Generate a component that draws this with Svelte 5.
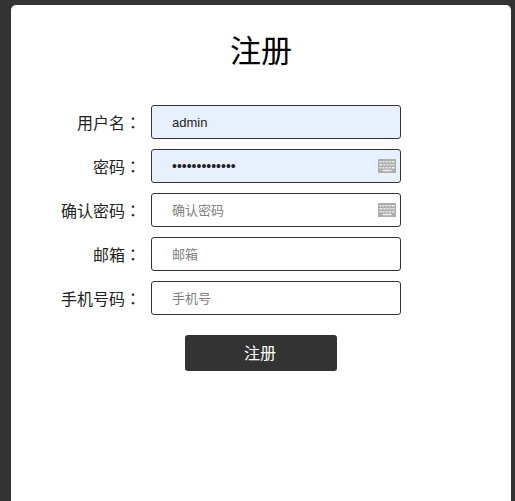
<script>
  const fields = [
    { label: '用户名', type: 'text', value: 'admin', placeholder: '', filled: true, kb: false },
    { label: '密码', type: 'password', value: 'admin12345678', placeholder: '', filled: true, kb: true },
    { label: '确认密码', type: 'password', value: '', placeholder: '确认密码', filled: false, kb: true },
    { label: '邮箱', type: 'text', value: '', placeholder: '邮箱', filled: false, kb: false },
    { label: '手机号码', type: 'text', value: '', placeholder: '手机号', filled: false, kb: false }
  ];
</script>

<div class="page">
  <main class="card">
    <h1>注册</h1>
    <form class="form">
      {#each fields as f}
        <div class="row">
          <label for={f.label}>{f.label}<span class="colon">：</span></label>
          <div class="control">
            <input id={f.label} class:filled={f.filled} class:dots={f.value && f.type === 'password'} type={f.type} value={f.value} placeholder={f.placeholder} />
            {#if f.kb}
              <svg class="kb" viewBox="0 0 18 14" width="18" height="14" aria-hidden="true">
                <rect width="18" height="14" rx="0.5" fill="#adadad" />
                <g fill="#ececec">
                  <rect x="1.5" y="2" width="2" height="1.5" /><rect x="4.5" y="2" width="2" height="1.5" /><rect x="7.5" y="2" width="2" height="1.5" /><rect x="10.5" y="2" width="2" height="1.5" /><rect x="13.5" y="2" width="3" height="1.5" />
                  <rect x="1.5" y="5" width="3" height="1.5" /><rect x="5.5" y="5" width="2" height="1.5" /><rect x="8.5" y="5" width="2" height="1.5" /><rect x="11.5" y="5" width="2" height="1.5" /><rect x="14.5" y="5" width="2" height="1.5" />
                  <rect x="1.5" y="8" width="2" height="1.5" /><rect x="4.5" y="8" width="2" height="1.5" /><rect x="7.5" y="8" width="2" height="1.5" /><rect x="10.5" y="8" width="2" height="1.5" /><rect x="13.5" y="8" width="3" height="1.5" />
                  <rect x="4.5" y="10.75" width="9" height="1.5" />
                </g>
              </svg>
            {/if}
          </div>
        </div>
      {/each}
      <button type="button">注册</button>
    </form>
  </main>
</div>

<style>
  :global(body) {
    margin: 0;
    background: #333;
    overflow: hidden;
  }
  .page {
    height: 501px;
    padding: 5px 4px 0 11px;
    box-sizing: border-box;
    font-family: Arial, "Liberation Sans", "Noto Sans CJK SC", sans-serif;
  }
  .card {
    width: 500px;
    height: 496px;
    background: #fff;
    border-radius: 5px 5px 0 0;
    padding-top: 28px;
    box-sizing: border-box;
  }
  h1 {
    margin: 0 0 34px;
    font-size: 31px;
    line-height: 38px;
    font-weight: 400;
    text-align: center;
    color: #000;
  }
  .form {
    display: flex;
    flex-direction: column;
    gap: 10px;
    padding-left: 20px;
  }
  .row {
    display: flex;
    align-items: center;
    gap: 10px;
    height: 34px;
  }
  label {
    width: 110px;
    text-align: right;
    font-size: 16px;
    color: #222;
  }
  .colon {
    font-family: "Noto Sans CJK TC", sans-serif;
  }
  .control {
    position: relative;
    width: 250px;
    height: 34px;
  }
  input {
    width: 100%;
    height: 100%;
    box-sizing: border-box;
    padding: 0 12px 0 20px;
    border: 1px solid #333;
    border-radius: 3px;
    background: #fff;
    font-family: inherit;
    font-size: 13px;
    color: #222;
    outline: none;
  }
  input.dots {
    font-size: 14px;
  }
  input.filled {
    background: #e8f0fe;
  }
  input::placeholder {
    color: #808080;
    opacity: 1;
  }
  .kb {
    position: absolute;
    right: 5px;
    top: 10px;
  }
  button {
    align-self: flex-start;
    margin: 10px 0 0 154px;
    width: 152px;
    height: 36px;
    border: 0;
    border-radius: 3px;
    background: #333;
    color: #fff;
    font-family: inherit;
    font-size: 16px;
    padding: 0 2px 2px 0;
  }
</style>
